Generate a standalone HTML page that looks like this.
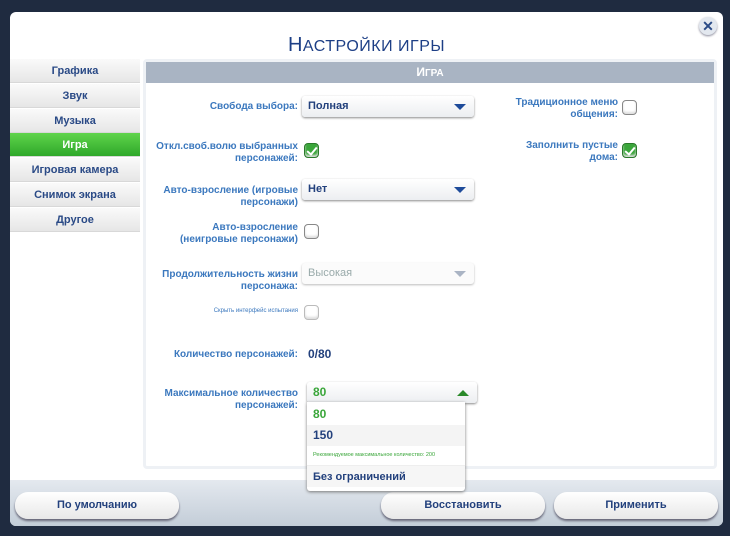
<!DOCTYPE html>
<html><head><meta charset="utf-8"><style>
*{box-sizing:border-box;margin:0;padding:0}
body{width:730px;height:536px;background:#1f2b40;font-family:"Liberation Sans",sans-serif;position:relative;overflow:hidden}
.dlg{position:absolute;left:10px;top:12px;width:713px;height:514px;background:#fff;border-radius:6px;overflow:hidden}
.bot{position:absolute;left:0;top:468px;width:713px;height:46px;background:linear-gradient(#e4e9ef,#c3cdd8)}
h1{position:absolute;left:0;width:713px;top:22px;text-align:center;font-weight:normal;color:#1d3f86;font-size:20px;letter-spacing:0.5px}
h1 small{font-size:16px}
.close{position:absolute;left:689px;top:5px;width:18px;height:18px;border-radius:50%;background:#e3e8ef;color:#2a4a86;font-size:14px;font-weight:bold;text-align:center;line-height:18px;box-shadow:0 1px 2px #889}
.tab{position:absolute;left:0;width:130px;height:24px;background:linear-gradient(#fafafa,#e6e6e6);border-bottom:1px solid #d8d8d8;text-align:center;line-height:24px;font-size:11px;font-weight:bold;color:#2a4a86}
.tab.on{background:linear-gradient(#5fd44b,#2fa82a);color:#fff}
.panel{position:absolute;left:133px;top:47px;width:574px;height:410px;border:3px solid #eef1f5;border-radius:4px}
.hdr{position:absolute;left:0;top:0;width:568px;height:21px;background:#a9b4c3;color:#fff;text-align:center;font-size:12px;font-weight:bold;line-height:21px}
.lbl{position:absolute;text-align:right;font-size:10px;font-weight:bold;color:#3b78be;line-height:12px}
.dd{position:absolute;height:21px;background:linear-gradient(#fff,#eceef1);border-radius:3px;box-shadow:0 1px 2px #888;font-size:11px;font-weight:bold;color:#23417d;line-height:21px;padding-left:6px}
.dd:after{content:"";position:absolute;right:8px;top:8px;border-left:6px solid transparent;border-right:6px solid transparent;border-top:6px solid #1e4b9a}
.dd.dis:after{border-top-color:#aab4c4}
.dd.up:after{border-top:0;border-bottom:6px solid #2a8a2a}
.cb{position:absolute;width:15px;height:15px;border-radius:4px;border:1px solid #888;background:#fff;box-shadow:inset 0 -2px 2px #ddd}
.cb.ck{background:#3aa63a;border-color:#2a7a2a}
.cb.ck:after{content:"";position:absolute;left:4px;top:1px;width:4px;height:8px;border-right:2px solid #fff;border-bottom:2px solid #fff;transform:rotate(40deg)}
.btn{position:absolute;top:480px;height:27px;width:164px;border-radius:13px;background:linear-gradient(#fff,#e8e8e8);box-shadow:0 2px 2px #667;text-align:center;line-height:27px;font-size:11px;font-weight:bold;color:#23417d}
.menu{position:absolute;left:297px;top:390px;width:158px;height:89px;background:#fff;box-shadow:0 1px 3px #777;border-radius:0 0 3px 3px}
.it{position:absolute;left:0;width:158px;padding-left:6px;font-size:11px;font-weight:bold;color:#23417d}
</style></head><body>
<div class="dlg">
<h1>Н<small>АСТРОЙКИ ИГРЫ</small></h1>
<div class="close">✕</div>
<div class="tab" style="top:47px">Графика</div>
<div class="tab" style="top:72px">Звук</div>
<div class="tab" style="top:97px">Музыка</div>
<div class="tab on" style="top:121px">Игра</div>
<div class="tab" style="top:146px">Игровая камера</div>
<div class="tab" style="top:171px">Снимок экрана</div>
<div class="tab" style="top:196px">Другое</div>
<div class="panel"><div class="hdr">И<span style="font-size:10px">ГРА</span></div></div>
<div class="bot"></div>
<div class="lbl" style="left:120px;width:168px;top:89px">Свобода выбора:</div>
<div class="dd" style="left:292px;top:84px;width:172px">Полная</div>
<div class="lbl" style="left:120px;width:168px;top:129px">Откл.своб.волю выбранных<br>персонажей:</div>
<div class="cb ck" style="left:294px;top:131px"></div>
<div class="lbl" style="left:120px;width:168px;top:173px">Авто-взросление (игровые<br>персонажи)</div>
<div class="dd" style="left:292px;top:167px;width:172px">Нет</div>
<div class="lbl" style="left:120px;width:168px;top:210px">Авто-взросление<br>(неигровые персонажи)</div>
<div class="cb" style="left:294px;top:212px"></div>
<div class="lbl" style="left:120px;width:168px;top:257px">Продолжительность жизни<br>персонажа:</div>
<div class="dd dis" style="left:292px;top:251px;width:172px;color:#9aa;font-weight:normal;background:#fbfbfb;box-shadow:0 1px 2px #bbb">Высокая</div>
<div class="lbl" style="left:120px;width:168px;top:293px;font-size:6px;font-weight:normal">Скрыть интерфейс испытания</div>
<div class="cb" style="left:294px;top:293px;border-color:#bbb"></div>
<div class="lbl" style="left:120px;width:168px;top:337px">Количество персонажей:</div>
<div class="lbl" style="left:298px;top:336px;color:#23417d;font-size:12px">0/80</div>
<div class="lbl" style="left:120px;width:168px;top:376px">Максимальное количество<br>персонажей:</div>
<div class="lbl" style="left:478px;width:130px;top:85px">Традиционное меню<br>общения:</div>
<div class="cb" style="left:612px;top:88px"></div>
<div class="lbl" style="left:478px;width:130px;top:128px">Заполнить пустые<br>дома:</div>
<div class="cb ck" style="left:612px;top:131px"></div>
<div class="btn" style="left:5px">По умолчанию</div>
<div class="btn" style="left:371px">Восстановить</div>
<div class="btn" style="left:544px">Применить</div>
<div class="dd up" style="left:297px;top:370px;width:170px;color:#3aa63a;font-size:12px">80</div>
<div class="menu">
<div class="it" style="top:5px;color:#3aa63a;font-size:12px">80</div>
<div class="it" style="top:23px;height:21px;background:#f4f4f4;padding-top:3px;font-size:12px">150</div>
<div class="it" style="top:50px;font-size:5.5px;color:#3aa63a;font-weight:normal">Рекомендуемое максимальное количество: 200</div>
<div class="it" style="top:63px;height:22px;background:#f6f6f6;border-top:1px solid #eee;padding-top:5px">Без ограничений</div>
</div>
</div>
</body></html>
